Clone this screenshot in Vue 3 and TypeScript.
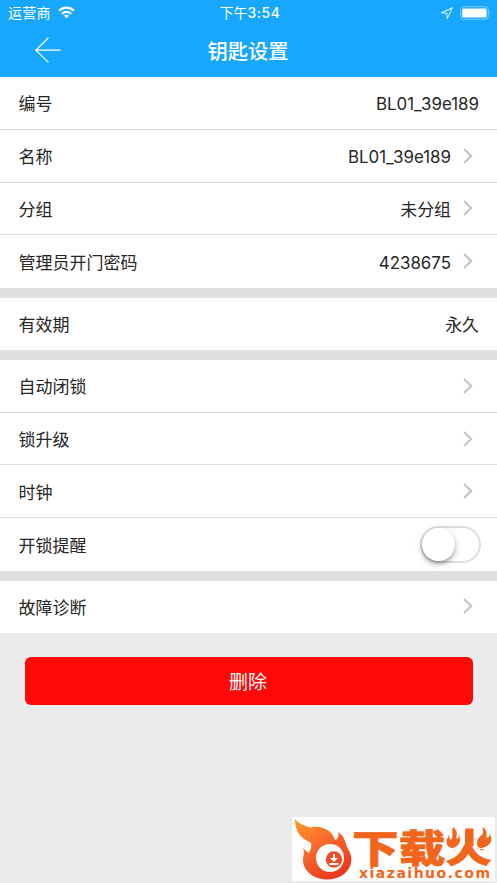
<script setup lang="ts">
interface Row {
  label: string
  value?: string
  arrow?: boolean
  toggle?: boolean
}

const groups: Row[][] = [
  [
    { label: '编号', value: 'BL01_39e189' },
    { label: '名称', value: 'BL01_39e189', arrow: true },
    { label: '分组', value: '未分组', arrow: true },
    { label: '管理员开门密码', value: '4238675', arrow: true },
  ],
  [{ label: '有效期', value: '永久' }],
  [
    { label: '自动闭锁', arrow: true },
    { label: '锁升级', arrow: true },
    { label: '时钟', arrow: true },
    { label: '开锁提醒', toggle: true },
  ],
  [{ label: '故障诊断', arrow: true }],
]
</script>

<template>
  <div class="screen">
    <header class="header">
      <div class="status">
        <div class="carrier">
          <span>运营商</span>
          <svg class="wifi" viewBox="0 0 17 13" width="17" height="13">
            <g fill="none" stroke="#fff" stroke-width="2.1">
              <path d="M1 4.7C5.3 .6 11.7 .6 16 4.7" />
              <path d="M3.8 7.7C6.5 5.2 10.5 5.2 13.2 7.7" />
            </g>
            <path d="M8.5 12.2L5.9 9.7C7.3 8.3 9.7 8.3 11.1 9.7Z" fill="#fff" />
          </svg>
        </div>
        <div class="time">下午<b>3:54</b></div>
        <div class="indicators">
          <svg viewBox="0 0 12 12" width="12" height="12">
            <path d="M.6 5.8L11.2 .9L6.4 11.2L5.8 6.3Z" fill="none" stroke="#d4efff" stroke-width="1.1" />
          </svg>
          <svg viewBox="0 0 32 14" width="32" height="14">
            <rect x=".7" y=".7" width="27.6" height="12.6" rx="3" fill="none" stroke="#7accff" stroke-width="1" />
            <rect x="2.3" y="2.5" width="24.2" height="9" rx="1.3" fill="#fff" />
            <path d="M29.7 4.8Q31.3 7 29.7 9.2Z" fill="#7accff" />
          </svg>
        </div>
      </div>
      <div class="nav">
        <svg class="back" viewBox="0 0 28 28" width="28" height="28">
          <path d="M14.5 1.8L1.8 14.2L14.5 26.4M2 14.2H26.5" fill="none" stroke="#fff" stroke-width="1.2" />
        </svg>
        <h1>钥匙设置</h1>
      </div>
    </header>

    <main>
      <section v-for="(group, g) in groups" :key="g" class="group">
        <div v-for="row in group" :key="row.label" class="row">
          <span class="label">{{ row.label }}</span>
          <span v-if="row.value" class="value">{{ row.value }}</span>
          <svg v-if="row.arrow" class="chevron" viewBox="0 0 10 16" width="10" height="16">
            <path d="M1 1L8.2 8L1 15" fill="none" stroke="#c2c2c7" stroke-width="2" />
          </svg>
          <span v-if="row.toggle" class="switch"><i></i></span>
        </div>
      </section>
      <button class="delete" type="button">删除</button>
    </main>

    <svg class="brand" viewBox="0 0 203 64" width="203" height="64">
      <defs>
        <linearGradient id="flame" x1="0" y1="0" x2="0.6" y2="1">
          <stop offset="0" stop-color="#ff9a2e" />
          <stop offset=".5" stop-color="#f8692b" />
          <stop offset="1" stop-color="#ea3a22" />
        </linearGradient>
      </defs>
      <rect width="203" height="64" fill="#fdfdfd" />
      <path d="M3 2C7 7 13 9 20 11C18 13 18 12 20 10C32 9 40 14 43 23C46 22 47 19 46 15C53 19 53 26 56 32C59 37 60 41 59 46C57 56 47 62.5 35 62.5C21 62.5 11 53 11 43C11 39 13 36 11 31C13 33 15 35 17 36C18 33 20 31 19 26C16 24 14 23 12 22C6 18 3 11 3 2Z" fill="url(#flame)" />
      <circle cx="38" cy="41" r="14" fill="#fff" />
      <circle cx="42" cy="42.5" r="8.2" fill="#ee4b27" />
      <path d="M42 37V42M37.5 47H46.5" fill="none" stroke="#fff" stroke-width="2" />
      <path d="M38 41H46L42 45Z" fill="#fff" />
      <text class="brand-name" x="60" y="44.5" textLength="140" lengthAdjust="spacingAndGlyphs">下载火</text>
      <path d="M152 9H173V27L169 33H152ZM182 9H203V32H186L182 28Z" fill="#fdfdfd" />
      <path d="M173.5 11.5H181.5V29H173.5Z" fill="#f2661c" />
      <g fill="#f2661c">
        <path d="M161 10C168 16 163 19 165 22C167 21 167 19 166 17C170 22 168 29 161 31C154 31 153 24 157 18C157 21 158 22 159 23C162 18 159 15 161 10Z" />
        <path d="M191 10C197 15 193 18 195 21C198 20 198 18 197 16C202 22 199 29 190 31C186 31 185 29 185 26C185 22 187 20 190 18C192 15 190 13 191 10Z" />
      </g>
      <text class="brand-url" x="67" y="61" textLength="131">xiazaihuo.com</text>
    </svg>
  </div>
</template>

<style>
body {
  background: #eaeaea;
}
</style>

<style scoped>
.screen {
  position: relative;
  min-height: 883px;
  background: #eaeaea;
  color: #262626;
  font-family: Inter, "Noto Sans CJK SC", sans-serif;
}
.header {
  height: 77px;
  background: #18a7ff;
  color: #fff;
}
.status {
  display: grid;
  grid-template-columns: 1fr auto 1fr;
  align-items: center;
  height: 25px;
  padding: 0 5px 0 8px;
  font-size: 14px;
  line-height: 20px;
}
.carrier {
  display: flex;
  align-items: center;
  gap: 7px;
  letter-spacing: 0.2px;
}
.time b {
  font-size: 13.8px;
  font-weight: 500;
  letter-spacing: 0.7px;
}
.indicators {
  display: flex;
  align-items: center;
  justify-content: flex-end;
  gap: 7px;
}
.nav {
  display: grid;
  grid-template-columns: 1fr auto 1fr;
  align-items: center;
  height: 50px;
}
.back {
  margin-left: 34px;
}
h1 {
  margin: 0;
  padding: 3px 1px 0 0;
  font-size: 20.3px;
  font-weight: 500;
  line-height: 47px;
}
.group + .group {
  padding-top: 9.6px;
  background: #dfdfdf;
}
.row {
  display: flex;
  align-items: center;
  box-sizing: border-box;
  height: 52.76px;
  padding: 3px 18px 0 18.5px;
  background: #fff;
  border-bottom: 1px solid #dedede;
  font-size: 17px;
  line-height: 24px;
}
.row:last-child {
  border-bottom-color: #fff;
}
.label {
  flex: 1;
}
.value {
  font-size: 16.9px;
}
.chevron {
  margin: 0 6px 3px 12px;
}
.switch {
  box-sizing: border-box;
  width: 61px;
  height: 37px;
  margin: 0 -2px 3px 0;
  border: 2px solid #dedede;
  border-radius: 19px;
}
.switch i {
  display: block;
  width: 33px;
  height: 33px;
  border-radius: 50%;
  background: #fff;
  box-shadow: 0 3px 4px rgba(0, 0, 0, 0.3), 0 2px 12px rgba(0, 0, 0, 0.1);
}
.delete {
  display: block;
  width: 448px;
  height: 48px;
  margin: 23.6px 0 0 24.5px;
  padding: 0 1px 0 0;
  border: 0;
  border-radius: 6px;
  background: #fe0808;
  color: #fff;
  font: 19px Inter, "Noto Sans CJK SC", sans-serif;
}
.brand {
  position: absolute;
  right: 2px;
  bottom: 2px;
  overflow: visible;
}
.brand-name {
  fill: #f2661c;
  stroke: #f2661c;
  stroke-width: 0.6;
  font: 900 38px "Noto Sans CJK SC", sans-serif;
}
.brand-url {
  fill: #f2661c;
  font: 700 14px "DejaVu Sans", sans-serif;
}
</style>
